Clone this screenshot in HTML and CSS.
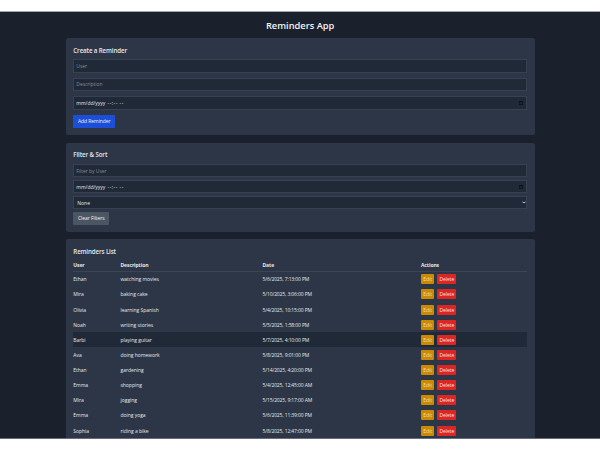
FILE: index.html
```html
<!DOCTYPE html>
<html lang="en">
<head>
<meta charset="utf-8">
<title>Reminders App</title>
<link rel="stylesheet" href="styles.css">
</head>
<body>
<main class="screen">
  <h1 class="title">Reminders App</h1>
  <section class="card create">
    <h2 class="heading">Create a Reminder</h2>
    <div class="field placeholder">User</div>
    <div class="field placeholder">Description</div>
    <div class="field date"><span>mm/dd/yyyy</span><span class="time">--:-- --</span><svg class="calendar" viewBox="0 0 4 4"><path d="M0 0h4v4H0zM.7 1.2v2.1h2.6V1.2z" fill-rule="evenodd"/></svg></div>
    <div class="button add">Add Reminder</div>
  </section>
  <section class="card filter">
    <h2 class="heading">Filter &amp; Sort</h2>
    <div class="field placeholder">Filter by User</div>
    <div class="field date"><span>mm/dd/yyyy</span><span class="time">--:-- --</span><svg class="calendar" viewBox="0 0 4 4"><path d="M0 0h4v4H0zM.7 1.2v2.1h2.6V1.2z" fill-rule="evenodd"/></svg></div>
    <div class="field select">None<svg class="chevron" viewBox="0 0 4 3"><path d="M.5.9 2 1.9 3.5.9"/></svg></div>
    <div class="button clear">Clear Filters</div>
  </section>
  <section class="card list">
    <h2 class="heading">Reminders List</h2>
    <div class="row head"><span>User</span><span>Description</span><span>Date</span><span>Actions</span></div>
    <div id="rows"></div>
  </section>
</main>
<script src="app.js"></script>
</body>
</html>
```
FILE: styles.css
```css
* { box-sizing: border-box; }
body {
  margin: 0;
  padding-top: 11px;
  height: 450px;
  overflow: hidden;
  background: #fff;
  font-family: "Open Sans", "Noto Sans", sans-serif;
  font-size: 5px;
  color: #e5e7eb;
}
.screen {
  height: 428px;
  overflow: hidden;
  padding: 7.5px 65.5px 0 65.8px;
  background: #1b212c;
  border-top: 1px solid #a3a6ab;
  border-bottom: 1px solid #686d7b;
}
.title {
  margin: 0 0 6.5px;
  height: 12px;
  line-height: 12px;
  font-size: 9.3px;
  font-weight: 600;
  text-align: center;
  color: #f3f4f6;
}
.card {
  padding: 7.5px 7.5px 0;
  border-radius: 2.5px;
  background: #2d3646;
}
.create { height: 97px; margin-bottom: 7.5px; }
.filter { height: 89.5px; margin-bottom: 7.2px; }
.list { height: 220px; }
.heading {
  margin: 0 0 4.7px;
  height: 9px;
  line-height: 9.8px;
  font-size: 6.2px;
  font-weight: 600;
  letter-spacing: -0.12px;
}
.field {
  display: flex;
  align-items: center;
  height: 13.4px;
  padding: 0 2px;
  border: 1px solid #374151;
  background: #202937;
  white-space: pre;
}
.create .field { margin-bottom: 5.2px; }
.filter .heading { margin-bottom: 5px; }
.filter .field { margin-bottom: 2.6px; }
.placeholder { color: #848b98; letter-spacing: -0.04px; }
.time { margin-left: 2.2px; letter-spacing: 0.5px; }
.calendar { width: 4px; height: 4px; margin-left: auto; margin-right: 1px; fill: #0c1017; }
.chevron { width: 4px; height: 3px; margin-left: auto; margin-right: -2px; fill: none; stroke: #d3d6db; stroke-width: 0.9; }
.select { padding-left: 3px; }
.button {
  display: flex;
  align-items: center;
  justify-content: center;
  height: 12.7px;
  border-radius: 1px;
  color: #f3f4f6;
  letter-spacing: -0.06px;
}
.add { width: 42px; background: #1d4ed8; }
.clear { width: 36px; background: #4b5563; }
.row {
  display: grid;
  grid-template-columns: 47.2px 142px 158.5px 1fr;
  align-items: center;
  height: 15.13px;
  white-space: nowrap;
  letter-spacing: -0.03px;
}
.date-cell { letter-spacing: -0.12px; }
.list .heading { margin-bottom: 3px; }
.head {
  height: 13px;
  border-bottom: 1px solid #3b4555;
  font-weight: 700;
  letter-spacing: -0.08px;
}
#rows { margin-top: 0.1px; }
.hover { background: #202937; }
.actions { display: flex; gap: 2.9px; }
.actions .button { height: 10px; }
.edit { width: 13.4px; background: #ca8a04; color: #f6dfae; }
.delete { width: 19px; background: #dc2626; color: #fbe2e2; }
```
FILE: app.js
```js
const reminders = [
  ["Ethan", "watching movies", "5/6/2025, 7:13:00 PM"],
  ["Mira", "baking cake", "5/10/2025, 3:06:00 PM"],
  ["Olivia", "learning Spanish", "5/4/2025, 10:15:00 PM"],
  ["Noah", "writing stories", "5/5/2025, 1:58:00 PM"],
  ["Barbi", "playing guitar", "5/7/2025, 4:10:00 PM"],
  ["Ava", "doing homework", "5/8/2025, 9:01:00 PM"],
  ["Ethan", "gardening", "5/14/2025, 4:20:00 PM"],
  ["Emma", "shopping", "5/4/2025, 12:45:00 AM"],
  ["Mira", "jogging", "5/15/2025, 9:17:00 AM"],
  ["Emma", "doing yoga", "5/6/2025, 11:39:00 PM"],
  ["Sophia", "riding a bike", "5/8/2025, 12:47:00 PM"]
];
document.getElementById("rows").innerHTML = reminders.map((r, i) =>
  `<div class="row${i === 4 ? " hover" : ""}"><span>${r[0]}</span><span>${r[1]}</span><span class="date-cell">${r[2]}</span>` +
  `<span class="actions"><span class="button edit">Edit</span><span class="button delete">Delete</span></span></div>`
).join("");
```
